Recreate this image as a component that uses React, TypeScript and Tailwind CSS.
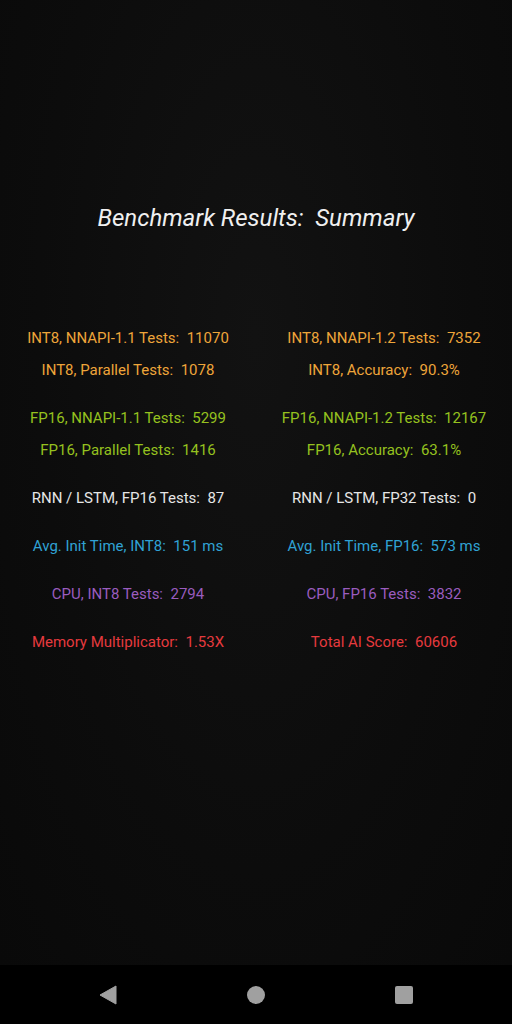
import React from 'react';

type Stat = { label: string; value: string };

const groups: { color: string; rows: [Stat, Stat][] }[] = [
  {
    color: 'text-[#eea53a]',
    rows: [
      [
        { label: 'INT8, NNAPI-1.1 Tests:', value: '11070' },
        { label: 'INT8, NNAPI-1.2 Tests:', value: '7352' },
      ],
      [
        { label: 'INT8, Parallel Tests:', value: '1078' },
        { label: 'INT8, Accuracy:', value: '90.3%' },
      ],
    ],
  },
  {
    color: 'text-[#95c11f]',
    rows: [
      [
        { label: 'FP16, NNAPI-1.1 Tests:', value: '5299' },
        { label: 'FP16, NNAPI-1.2 Tests:', value: '12167' },
      ],
      [
        { label: 'FP16, Parallel Tests:', value: '1416' },
        { label: 'FP16, Accuracy:', value: '63.1%' },
      ],
    ],
  },
  {
    color: 'text-[#e6e6e6]',
    rows: [
      [
        { label: 'RNN / LSTM, FP16 Tests:', value: '87' },
        { label: 'RNN / LSTM, FP32 Tests:', value: '0' },
      ],
    ],
  },
  {
    color: 'text-[#30a2d4]',
    rows: [
      [
        { label: 'Avg. Init Time, INT8:', value: '151 ms' },
        { label: 'Avg. Init Time, FP16:', value: '573 ms' },
      ],
    ],
  },
  {
    color: 'text-[#9a5cbf]',
    rows: [
      [
        { label: 'CPU, INT8 Tests:', value: '2794' },
        { label: 'CPU, FP16 Tests:', value: '3832' },
      ],
    ],
  },
  {
    color: 'text-[#e63a3e]',
    rows: [
      [
        { label: 'Memory Multiplicator:', value: '1.53X' },
        { label: 'Total AI Score:', value: '60606' },
      ],
    ],
  },
];

const App: React.FC = () => {
  return (
    <div
      className="w-[512px] h-[1024px] flex flex-col bg-[#0c0c0c] overflow-hidden"
      style={{ fontFamily: 'Roboto, "Noto Sans", sans-serif' }}
    >
      {/* Main content */}
      <div className="flex-1 flex flex-col bg-[radial-gradient(ellipse_at_50%_35%,#121212_0%,#0c0c0c_60%,#090909_100%)]">
        <h1 className="mt-[202px] h-8 flex items-center justify-center text-[24px] italic font-normal text-[#f0f0f0] whitespace-pre">
          Benchmark Results:  Summary
        </h1>

        <div className="mt-[88px] flex flex-col gap-4">
          {groups.map((g, gi) => (
            <div key={gi} className={`flex flex-col ${g.color}`}>
              {g.rows.map((row, ri) => (
                <div key={ri} className="grid grid-cols-2 h-8 items-center">
                  {row.map((s, si) => (
                    <div key={si} className="text-center text-[15px] whitespace-pre">
                      {s.label}  {s.value}
                    </div>
                  ))}
                </div>
              ))}
            </div>
          ))}
        </div>
      </div>

      {/* Navigation bar */}
      <div className="h-[59px] bg-black flex items-center justify-center gap-[130px]">
        <svg width="18" height="20" viewBox="0 0 18 20">
          <path d="M17 1 L17 19 L1 10 Z" fill="#a0a0a0" stroke="#a0a0a0" strokeWidth="1" strokeLinejoin="round" />
        </svg>
        <div className="w-[18px] h-[18px] rounded-full bg-[#a0a0a0]" />
        <div className="w-[18px] h-[18px] rounded-[2px] bg-[#a0a0a0]" />
      </div>
    </div>
  );
};

export default App;
